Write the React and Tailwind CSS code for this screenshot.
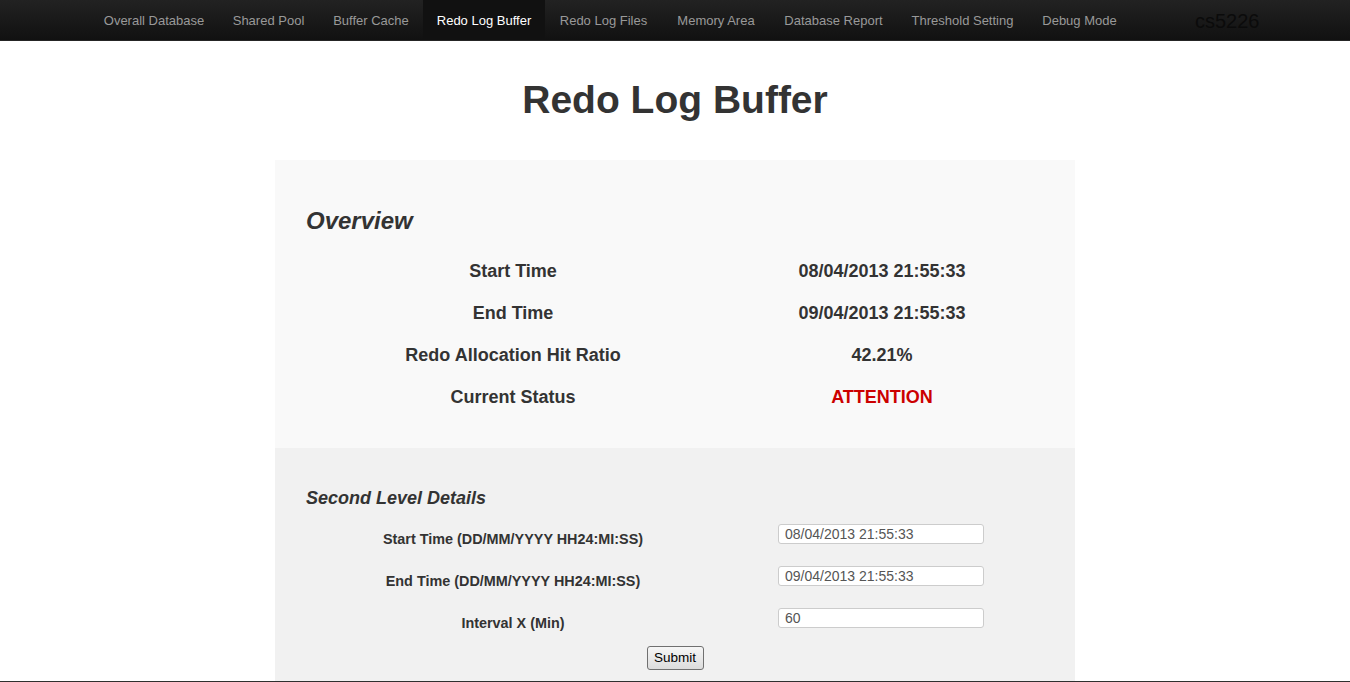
import React from "react";

const navItems = [
  ["Overall Database", "w-[128px]"],
  ["Shared Pool", "w-[101px]"],
  ["Buffer Cache", "w-[104px]"],
  ["Redo Log Buffer", "w-[122px]"],
  ["Redo Log Files", "w-[117px]"],
  ["Memory Area", "w-[108px]"],
  ["Database Report", "w-[127px]"],
  ["Threshold Setting", "w-[131px]"],
  ["Debug Mode", "w-[103px]"],
];

const overview = [
  ["Start Time", "08/04/2013 21:55:33", false],
  ["End Time", "09/04/2013 21:55:33", false],
  ["Redo Allocation Hit Ratio", "42.21%", false],
  ["Current Status", "ATTENTION", true],
];

const form = [
  ["Start Time (DD/MM/YYYY HH24:MI:SS)", "08/04/2013 21:55:33"],
  ["End Time (DD/MM/YYYY HH24:MI:SS)", "09/04/2013 21:55:33"],
  ["Interval X (Min)", "60"],
];

export default function App() {
  return (
    <div
      className="flex h-[682px] flex-col overflow-hidden border-b border-[#2f2f2f] bg-white text-[#333]"
      style={{ fontFamily: '"Liberation Sans", Arial, Helvetica, sans-serif' }}
    >
      <div className="flex h-[41px] shrink-0 items-stretch border-b border-[#252525] bg-gradient-to-b from-[#222222] to-[#111111] pl-[90px]">
        {navItems.map(([item, w]) => {
          const active = item === "Redo Log Buffer";
          return (
            <div
              key={item}
              className={
                "flex h-[40px] items-center justify-center whitespace-nowrap pt-[2px] text-[13px] " +
                w +
                " " +
                (active ? "bg-[#111111] text-white" : "text-[#999999]")
              }
            >
              {item}
            </div>
          );
        })}
        <div className="ml-[64px] flex h-[40px] items-center pt-[1px] text-[20px] text-[#0b0b0b]">
          cs5226
        </div>
      </div>

      <h1 className="mt-[39px] h-[40px] text-center text-[39px] font-bold leading-[40px] text-[#333]">
        Redo Log Buffer
      </h1>

      <div className="mx-auto mt-[40px] flex w-[800px] flex-1 flex-col">
        <div className="bg-[#f9f9f9] px-[31px] pt-[46px] pb-[30px]">
          <div className="h-[30px] text-[24px] font-bold italic leading-[30px]">Overview</div>
          <div className="mt-[14px]">
            {overview.map(([label, value, alert]) => (
              <div key={label} className="flex h-[42px] items-center text-[18px] font-bold">
                <div className="w-[414px] text-center">{label}</div>
                <div
                  className={
                    "w-[324px] text-center " + (alert ? "text-[#cc0000]" : "text-[#333]")
                  }
                >
                  {value}
                </div>
              </div>
            ))}
          </div>
        </div>

        <div className="flex-1 bg-[#f1f1f1] px-[31px] pt-[38px]">
          <div className="h-[24px] text-[18px] font-bold italic leading-[24px]">
            Second Level Details
          </div>
          <div className="mt-[7px]">
            {form.map(([label, value]) => (
              <div key={label} className="flex h-[42px]">
                <div className="flex w-[414px] items-center justify-center pt-[3px] text-[14.4px] font-bold">
                  {label}
                </div>
                <div className="flex w-[322px] justify-center">
                  <input
                    readOnly
                    value={value}
                    className="mt-[7px] h-[20px] w-[206px] rounded-[3px] border border-[#cccccc] bg-white px-[6px] text-[14px] leading-[18px] text-[#555] outline-none"
                    style={{ fontFamily: '"Liberation Sans", Arial, sans-serif' }}
                  />
                </div>
              </div>
            ))}
          </div>
          <div className="mt-[3px] flex justify-center">
            <button
              className="h-[24px] w-[57px] rounded-[3px] border border-[#707070] bg-gradient-to-b from-[#f6f6f6] to-[#dcdcdc] text-[13.5px] text-black"
              style={{ fontFamily: '"Liberation Sans", Arial, sans-serif' }}
            >
              Submit
            </button>
          </div>
        </div>
      </div>
    </div>
  );
}
